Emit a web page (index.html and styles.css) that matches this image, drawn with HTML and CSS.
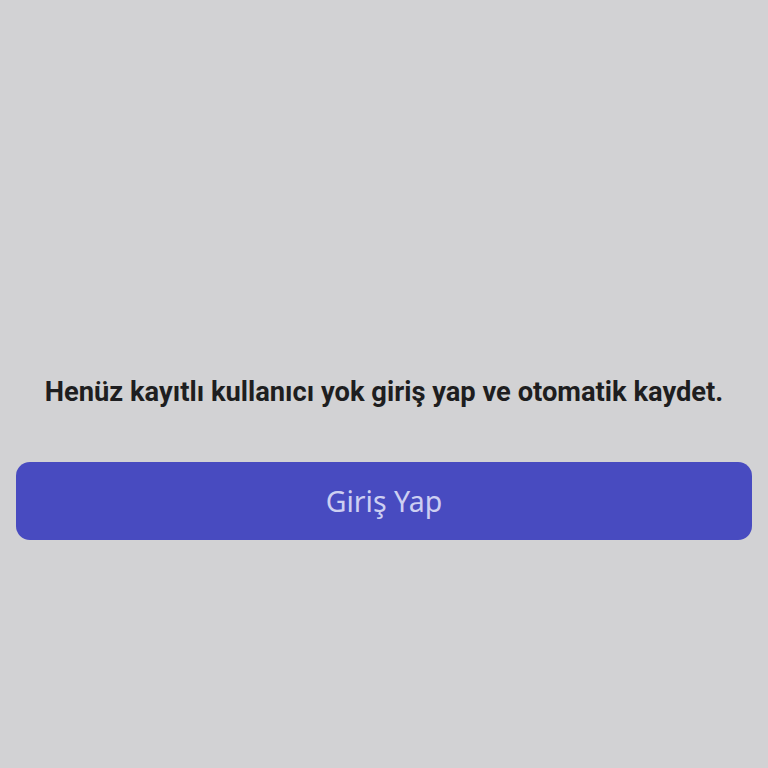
FILE: index.html
```html
<!DOCTYPE html>
<html>
<head lang="tr">
    <meta charset="UTF-8">
    <title>Giriş</title>
    <link rel="stylesheet" href="styles.css">
</head>
<body>
    <div class="container">
        <p class="empty-info">Henüz kayıtlı kullanıcı yok giriş yap ve otomatik kaydet.</p>
        <a href="javascript:;" class="login-btn">Giriş Yap</a>
    </div>
</body>
</html>
```
FILE: styles.css
```css
*{
    margin:0;  padding:0;
    text-decoration: none;
}
html, body{
    height:100%;
}
body{
    background-color: #d2d2d4;
}
.container{
    display: flex;
    flex-direction: column;
    padding: 374px 16px 0;
}
.empty-info{
    font-family: Roboto, "Liberation Sans", sans-serif;
    font-weight: bold;
    font-size: 27.3px;
    line-height: 36px;
    color: #1e1e20;
    text-align: center;
}
.login-btn{
    margin-top: 52px;
    height: 78px;
    border-radius: 14px;
    background-color: #484bc0;
    color: #cdcff2;
    font-family: "Noto Sans", "Open Sans", sans-serif;
    font-size: 28.5px;
    display: flex;
    align-items: center;
    justify-content: center;
}
```
